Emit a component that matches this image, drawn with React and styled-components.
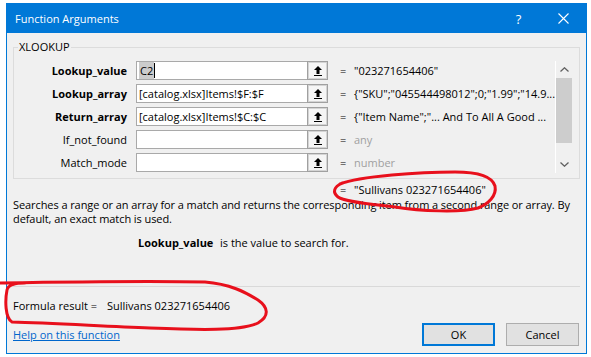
import React from "react";
import styled, { createGlobalStyle } from "styled-components";

const GlobalStyle = createGlobalStyle`
  html, body {
    margin: 0;
    padding: 0;
    background: #ffffff;
  }
  body {
    width: 591px;
    height: 357px;
    overflow: hidden;
    font-family: "Open Sans", "Segoe UI", sans-serif;
    font-size: 11px;
    color: #000;
  }
`;

const args = [
  { name: "Lookup_value", bold: true, text: "C2", selected: true, value: "\"023271654406\"" },
  { name: "Lookup_array", bold: true, text: "[catalog.xlsx]Items!$F:$F", value: "{\"SKU\";\"045544498012\";0;\"1.99\";\"14.9..." },
  { name: "Return_array", bold: true, text: "[catalog.xlsx]Items!$C:$C", value: "{\"Item Name\";\"... And To All A Good ..." },
  { name: "If_not_found", text: "", value: "any", muted: true },
  { name: "Match_mode", text: "", value: "number", muted: true },
];

const Page = styled.div`
  position: relative;
  width: 591px;
  height: 357px;
  box-sizing: border-box;
  padding: 3px 0 0 6px;
`;

const Dialog = styled.div`
  width: 581px;
  height: 351px;
  box-sizing: border-box;
  border: 1px solid #0078d7;
  background: #f0f0f0;
  display: flex;
  flex-direction: column;
`;

const TitleBar = styled.div`
  height: 29px;
  flex: none;
  background: #0078d7;
  color: #fff;
  display: flex;
  align-items: center;
  padding-left: 8px;
`;

const Title = styled.div`
  flex: 1;
  font-size: 11px;
  line-height: 14px;
`;

const TitleButton = styled.div`
  width: 45px;
  height: 29px;
  display: flex;
  align-items: center;
  justify-content: center;
  font-size: 13px;
  color: #fff;
`;

const Body = styled.div`
  flex: 1;
  display: flex;
  flex-direction: column;
  padding: 0 6px;
`;

const GroupBox = styled.fieldset`
  margin: 7px 0 0 0;
  padding: 7px 0 5px 0;
  border: 1px solid #dcdcdc;
  min-width: 0;
`;

const GroupLegend = styled.legend`
  margin-left: 4px;
  padding: 0 1px;
  line-height: 14px;
`;

const GroupInner = styled.div`
  display: flex;
  align-items: flex-start;
`;

const ArgList = styled.div`
  flex: 1;
  display: flex;
  flex-direction: column;
  gap: 4px;
`;

const ArgRow = styled.div`
  display: flex;
  align-items: center;
  height: 19px;
`;

const ArgLabel = styled.div`
  width: 113px;
  margin-right: 9px;
  text-align: right;
  font-weight: ${(p) => (p.$bold ? 700 : 400)};
  white-space: nowrap;
`;

const ArgInput = styled.div`
  width: 171px;
  height: 19px;
  box-sizing: border-box;
  border: 1px solid #a9a9a9;
  border-right: none;
  background: #fff;
  padding: 0 2px;
  line-height: 17px;
  white-space: nowrap;
  overflow: hidden;
  display: flex;
  align-items: stretch;
`;

const Selected = styled.span`
  background: #cccccc;
  padding: 0 1px;
`;

const Caret = styled.span`
  width: 1px;
  background: #000;
  margin: 1px 0;
`;

const RefButton = styled.div`
  width: 21px;
  height: 19px;
  box-sizing: border-box;
  border: 1px solid #a0a0a0;
  box-shadow: inset 0 0 0 1px #d4d4d4;
  background: #f5f5f5;
  display: flex;
  align-items: center;
  justify-content: center;
`;

const Equals = styled.div`
  width: 14px;
  padding-left: 12px;
  flex: none;
`;

const ArgValue = styled.div`
  color: ${(p) => (p.$muted ? "#a0a0a0" : "#000")};
  white-space: nowrap;
`;

const Scrollbar = styled.div`
  width: 17px;
  height: 112px;
  box-sizing: border-box;
  border-left: 1px solid #fff;
  margin-right: 7px;
  display: flex;
  flex-direction: column;
`;

const ScrollArrow = styled.div`
  height: 17px;
  display: flex;
  align-items: center;
  justify-content: center;
`;

const ScrollTrack = styled.div`
  flex: 1;
  display: flex;
  flex-direction: column;
`;

const ScrollThumb = styled.div`
  height: 65px;
  background: #cdcdcd;
`;

const ResultRow = styled.div`
  display: flex;
  margin-top: 4px;
  padding-left: 315px;
  line-height: 14px;
`;

const Description = styled.div`
  margin-top: 1px;
  line-height: 14px;
  letter-spacing: -0.08px;
  white-space: nowrap;
`;

const ArgHelp = styled.div`
  margin-top: 10px;
  padding-left: 125px;
  line-height: 14px;
  white-space: nowrap;
`;

const ArgHelpName = styled.span`
  display: inline-block;
  width: 82px;
  font-weight: 700;
`;

const Separator = styled.div`
  margin-top: 36px;
  height: 1px;
  background: #d9d9d9;
`;

const FormulaResult = styled.div`
  margin-top: 12px;
  line-height: 14px;
  display: flex;
`;

const FormulaLabel = styled.span`
  width: 94px;
`;

const Footer = styled.div`
  margin-top: 10px;
  display: flex;
  align-items: center;
  justify-content: space-between;
  padding-right: 1px;
`;

const HelpLink = styled.a`
  color: #0066cc;
  text-decoration: underline;
  line-height: 14px;
`;

const ButtonGroup = styled.div`
  display: flex;
  gap: 11px;
`;

const DialogButton = styled.div`
  width: 73px;
  height: 23px;
  box-sizing: border-box;
  background: #e1e1e1;
  border: ${(p) => (p.$default ? "2px solid #0078d7" : "1px solid #adadad")};
  display: flex;
  align-items: center;
  justify-content: center;
`;

const Annotation = styled.svg`
  position: absolute;
  left: 0;
  top: 0;
  pointer-events: none;
`;

const RefIcon = () => (
  <svg width="8" height="10" viewBox="0 0 8 10">
    <path d="M4 0 L8 4 L5.5 4 L5.5 8 L2.5 8 L2.5 4 L0 4 Z" fill="#000" />
    <rect x="0" y="9" width="8" height="1" fill="#000" />
  </svg>
);

const Chevron = ({ up }) => (
  <svg width="9" height="5" viewBox="0 0 9 5">
    <path
      d={up ? "M0.5 4.5 L4.5 0.8 L8.5 4.5" : "M0.5 0.5 L4.5 4.2 L8.5 0.5"}
      fill="none"
      stroke="#606060"
      strokeWidth="1.3"
    />
  </svg>
);

export default function App() {
  return (
    <>
      <GlobalStyle />
      <Page>
        <Dialog>
          <TitleBar>
            <Title>Function Arguments</Title>
            <TitleButton>?</TitleButton>
            <TitleButton>
              <svg width="11" height="11" viewBox="0 0 11 11">
                <path d="M0.5 0.5 L10.5 10.5 M10.5 0.5 L0.5 10.5" stroke="#fff" strokeWidth="1.1" />
              </svg>
            </TitleButton>
          </TitleBar>
          <Body>
            <GroupBox>
              <GroupLegend>XLOOKUP</GroupLegend>
              <GroupInner>
                <ArgList>
                  {args.map((a) => (
                    <ArgRow key={a.name}>
                      <ArgLabel $bold={a.bold}>{a.name}</ArgLabel>
                      <ArgInput>
                        {a.selected ? (
                          <>
                            <Selected>{a.text}</Selected>
                            <Caret />
                          </>
                        ) : (
                          a.text
                        )}
                      </ArgInput>
                      <RefButton>
                        <RefIcon />
                      </RefButton>
                      <Equals>=</Equals>
                      <ArgValue $muted={a.muted}>{a.value}</ArgValue>
                    </ArgRow>
                  ))}
                </ArgList>
                <Scrollbar>
                  <ScrollArrow>
                    <Chevron up />
                  </ScrollArrow>
                  <ScrollTrack>
                    <ScrollThumb />
                  </ScrollTrack>
                  <ScrollArrow>
                    <Chevron />
                  </ScrollArrow>
                </Scrollbar>
              </GroupInner>
            </GroupBox>
            <ResultRow>
              <Equals>=</Equals>
              <ArgValue>"Sullivans 023271654406"</ArgValue>
            </ResultRow>
            <Description>
              Searches a range or an array for a match and returns the corresponding item from a second range or array. By
              <br />
              default, an exact match is used.
            </Description>
            <ArgHelp>
              <ArgHelpName>Lookup_value</ArgHelpName>is the value to search for.
            </ArgHelp>
            <Separator />
            <FormulaResult>
              <FormulaLabel>Formula result =</FormulaLabel>
              <span>Sullivans 023271654406</span>
            </FormulaResult>
            <Footer>
              <HelpLink href="#">Help on this function</HelpLink>
              <ButtonGroup>
                <DialogButton $default>OK</DialogButton>
                <DialogButton>Cancel</DialogButton>
              </ButtonGroup>
            </Footer>
          </Body>
        </Dialog>
        <Annotation width="591" height="357" viewBox="0 0 591 357">
          <path
            d="M340 184 C360 176 420 172 455 172 C478 172 492 176 495 186 C497 196 488 204 478 208 C460 213 420 211 395 207 C370 204 345 202 338 197 C332 192 334 187 342 183"
            fill="none"
            stroke="#e8101c"
            strokeWidth="3"
            strokeLinecap="round"
          />
          <path
            d="M0 283 C60 282 160 281 205 282 C230 284 245 292 258 300 C268 307 270 316 258 323 C240 331 200 330 150 328 C100 326 50 323 12 322 C5 318 5 300 7 290 C8 285 15 283 25 283"
            fill="none"
            stroke="#e8101c"
            strokeWidth="3"
            strokeLinecap="round"
          />
        </Annotation>
      </Page>
    </>
  );
}
